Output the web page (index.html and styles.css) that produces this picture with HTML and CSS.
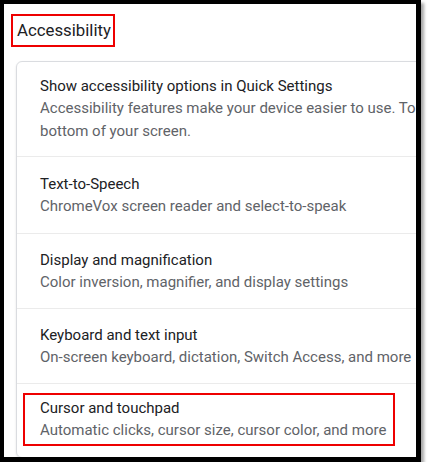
FILE: index.html
```html
<!DOCTYPE html>
<html lang="en">
<head>
  <meta charset="UTF-8" />
  <title>Accessibility</title>
  <link rel="stylesheet" href="styles.css">
</head>
<body>
  <div class="frame">
    <h2 class="page-title"><span class="mark-title">Accessibility</span></h2>
    <div class="card">
      <div class="row row-first">
        <div class="row-title">Show accessibility options in Quick Settings</div>
        <div class="row-sub">Accessibility features make your device easier to use. To access these features, select the time at the<br>bottom of your screen.</div>
      </div>
      <div class="row row-second">
        <div class="row-title">Text-to-Speech</div>
        <div class="row-sub">ChromeVox screen reader and select-to-speak</div>
      </div>
      <div class="row">
        <div class="row-title">Display and magnification</div>
        <div class="row-sub">Color inversion, magnifier, and display settings</div>
      </div>
      <div class="row">
        <div class="row-title">Keyboard and text input</div>
        <div class="row-sub">On-screen keyboard, dictation, Switch Access, and more</div>
      </div>
      <div class="row row-marked">
        <div class="mark-row">
          <div class="row-title">Cursor and touchpad</div>
          <div class="row-sub">Automatic clicks, cursor size, cursor color, and more</div>
        </div>
      </div>
    </div>
  </div>
</body>
</html>
```

FILE: styles.css
```css
body {
  margin: 0;
  background: #fff;
  font-family: Roboto, "Liberation Sans", sans-serif;
  color: #202124;
}
.frame {
  width: 421px;
  height: 462px;
  box-sizing: border-box;
  border: solid #000;
  border-width: 4px 5px 5px 4px;
  box-shadow: 3px 3px 3px rgba(0,0,0,0.35);
  background: #fff;
  overflow: hidden;
  padding-top: 10px;
}
.page-title {
  margin: 0 0 14px 7px;
  font-size: 16.8px;
  font-weight: normal;
  line-height: 0;
}
.mark-title {
  display: inline-block;
  border: 2px solid #e00;
  padding: 0 2px 0 4px;
  line-height: 29px;
  color: #202124;
}
.card {
  width: 760px;
  margin-left: 12px;
  border: 1px solid #dadce0;
  border-radius: 6px;
  box-shadow: 0 1px 2px rgba(60,64,67,0.15);
}
.row {
  padding: 15px 0 14px 23px;
  border-bottom: 1px solid #ebebeb;
}
.row:last-child {
  border-bottom: none;
}
.row-first {
  padding: 13px 0 13px 23px;
}
.row-second {
  padding: 16px 0 15px 23px;
}
.row-title {
  font-size: 15px;
  line-height: 22px;
  white-space: nowrap;
}
.row-sub {
  font-size: 15px;
  line-height: 23px;
  color: #5f6368;
  white-space: nowrap;
}
.row-marked {
  padding: 9px 0 11px 6px;
}
.mark-row {
  width: 372px;
  box-sizing: border-box;
  border: 2px solid #e00;
  padding: 2px 0 2px 15px;
}
```
